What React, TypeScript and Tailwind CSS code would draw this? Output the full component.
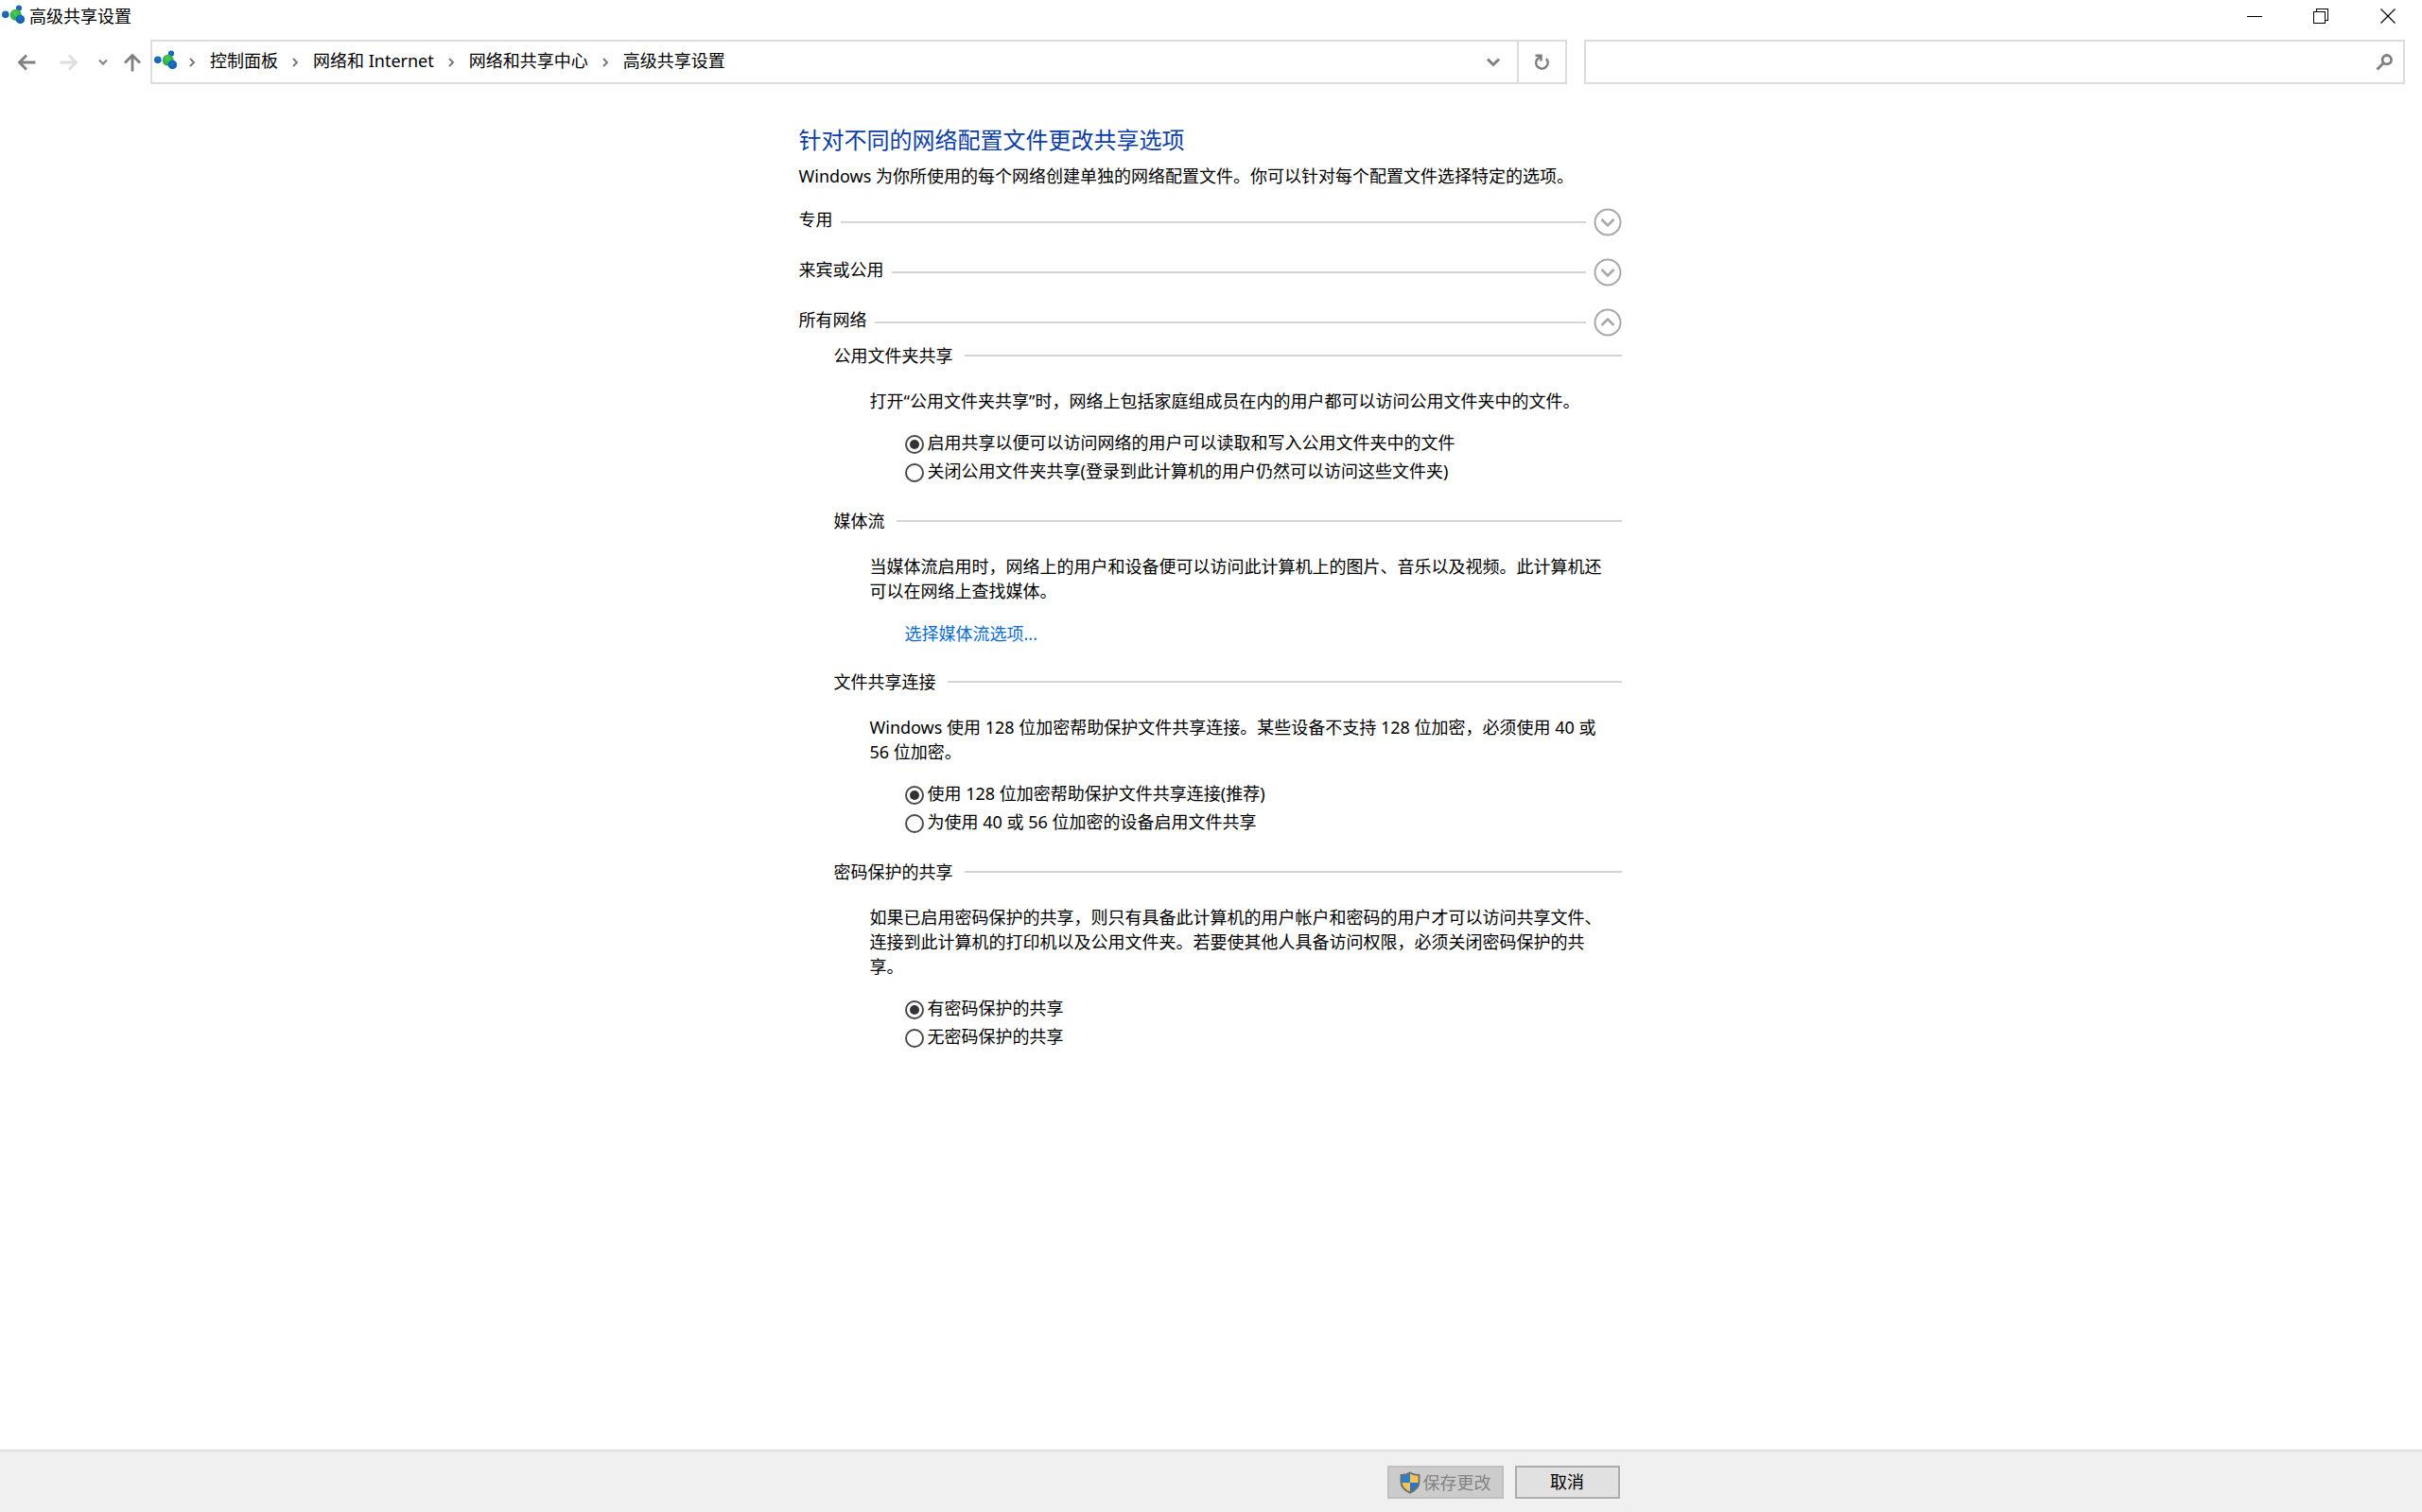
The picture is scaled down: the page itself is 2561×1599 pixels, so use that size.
import React, { useState } from 'react';
import type { ReactNode } from 'react';

interface OptionGroupProps {
  name: string;
  options: string[];
}

interface SettingProps {
  title: string;
  description: string;
  children: ReactNode;
}

interface ProfileRowProps {
  title: string;
  open: boolean;
  onToggle: () => void;
}

const crumbs = ['控制面板', '网络和 Internet', '网络和共享中心', '高级共享设置'];

const NetworkIcon: React.FC = () => (
  <svg width="26" height="22" viewBox="0 0 26 22" className="shrink-0" aria-hidden="true">
    <defs>
      <radialGradient id="nodeBlue" cx="45%" cy="40%" r="65%">
        <stop offset="0" stopColor="#1f74c6" />
        <stop offset="1" stopColor="#0f5aa8" />
      </radialGradient>
      <radialGradient id="nodeGreen" cx="45%" cy="35%" r="65%">
        <stop offset="0" stopColor="#4fcb5a" />
        <stop offset="1" stopColor="#22a53c" />
      </radialGradient>
    </defs>
    <circle cx="3.800" cy="10.300" r="3.800" fill="url(#nodeBlue)" />
    <circle cx="18" cy="3.600" r="3.100" fill="url(#nodeBlue)" />
    <circle cx="14.700" cy="10.800" r="6" fill="url(#nodeGreen)" />
    <circle cx="19.400" cy="15.400" r="4.700" fill="url(#nodeBlue)" />
  </svg>
);

const ShieldIcon: React.FC = () => (
  <svg width="22" height="24" viewBox="0 0 22 24" aria-hidden="true">
    <clipPath id="shield">
      <path d="M11 1.500C8 3.500 4.500 4 1.500 4v7c0 6 4.500 9.500 9.500 11.500 5-2 9.500-5.500 9.500-11.500V4c-3 0-6.500-.5-9.500-2.500z" />
    </clipPath>
    <g clipPath="url(#shield)">
      <path d="M0 0h11v12H0z" fill="#2f80cc" />
      <path d="M11 0h11v12H11z" fill="#f6c453" />
      <path d="M0 12h11v12H0z" fill="#f6c453" />
      <path d="M11 12h11v12H11z" fill="#2f74c4" />
    </g>
    <path
      d="M11 1.500C8 3.500 4.500 4 1.500 4v7c0 6 4.500 9.500 9.500 11.500 5-2 9.500-5.500 9.500-11.500V4c-3 0-6.500-.5-9.500-2.500z"
      fill="none"
      stroke="#6b7075"
      strokeWidth="2"
    />
  </svg>
);

const Separator: React.FC = () => (
  <svg width="8" height="10" viewBox="0 0 8 10" fill="none" stroke="#7a7a7a" strokeWidth="2" aria-hidden="true">
    <path d="M2 1l4 4-4 4" />
  </svg>
);

const OptionGroup: React.FC<OptionGroupProps> = ({ name, options }) => {
  const [selected, setSelected] = useState<number>(0);

  return (
    <div className="pl-[38px] pt-4">
      {options.map((option, i) => (
        <label key={option} className="flex h-[30px] items-center gap-1">
          <input
            type="radio"
            name={name}
            checked={selected === i}
            onChange={() => setSelected(i)}
            className="mt-1 size-5 shrink-0 appearance-none rounded-full border-2 border-[#4a4a4a] bg-white bg-clip-content p-[3px] checked:bg-[#333]"
          />
          <span>{option}</span>
        </label>
      ))}
    </div>
  );
};

const Setting: React.FC<SettingProps> = ({ title, description, children }) => (
  <section className="pb-[25px] pl-[37px]">
    <div className="flex h-[26px] items-center gap-3">
      <h3>{title}</h3>
      <div className="h-[2px] flex-1 bg-[#d4d4d4]" />
    </div>
    <div className="pl-[38px] pr-[6px] pt-[22px]">
      <p>{description}</p>
    </div>
    <div className="pl-[37px]">{children}</div>
  </section>
);

const ProfileRow: React.FC<ProfileRowProps> = ({ title, open, onToggle }) => (
  <div className="flex h-[53px] items-center gap-2">
    <h2 className="pb-[6px]">{title}</h2>
    <div className="h-[2px] flex-1 bg-[#d4d4d4]" />
    <button type="button" onClick={onToggle} aria-label={title} aria-expanded={open}>
      <svg width="30" height="30" viewBox="0 0 30 30" fill="none" stroke="#a9a9a9" strokeWidth="2">
        <circle cx="15" cy="15" r="13.500" />
        <path d={open ? 'M8.500 18l6.500-6.500 6.500 6.500' : 'M8.500 12l6.500 6.500 6.500-6.500'} strokeWidth="2.600" />
      </svg>
    </button>
  </div>
);

const App: React.FC = () => {
  const [openProfile, setOpenProfile] = useState<string>('所有网络');

  const toggle = (title: string): void => {
    setOpenProfile(openProfile === title ? '' : title);
  };

  return (
    <div
      lang="zh-CN"
      className="flex min-h-screen flex-col bg-white font-['Noto_Sans','Noto_Sans_CJK_SC',sans-serif] text-[18px] leading-[26px] text-black"
    >
      <header className="flex h-[35px] items-center justify-between pl-[2px]">
        <div className="flex items-center gap-[3px]">
          <div className="pb-1">
            <NetworkIcon />
          </div>
          <h1 className="pb-[2px]">高级共享设置</h1>
        </div>
        <div className="flex h-full pb-[2px]">
          <button type="button" aria-label="最小化" className="flex w-[70px] items-center justify-center">
            <svg width="16" height="16" viewBox="0 0 16 16" stroke="#000" shapeRendering="crispEdges">
              <path d="M0 8h16" strokeWidth="1" />
            </svg>
          </button>
          <button type="button" aria-label="还原" className="flex w-[70px] items-center justify-center">
            <svg width="16" height="16" viewBox="0 0 16 16" fill="none" stroke="#000" shapeRendering="crispEdges">
              <path d="M.5 3.500h12v12H.500zM3.500 3.500v-3h12v12h-3" />
            </svg>
          </button>
          <button type="button" aria-label="关闭" className="flex w-[72px] items-center justify-center">
            <svg width="16" height="16" viewBox="0 0 16 16" stroke="#000">
              <path d="M.5.500l15 15M15.500.500l-15 15" strokeWidth="1.200" />
            </svg>
          </button>
        </div>
      </header>

      <nav className="flex items-center pb-2 pl-[18px] pr-[18px] pt-[7px]">
        <button type="button" aria-label="后退" className="mr-[25px]">
          <svg width="20" height="20" viewBox="0 0 20 20" fill="none" stroke="#808080" strokeWidth="2.800">
            <path d="M19.500 10H3M10 2.500L2.500 10l7.500 7.500" />
          </svg>
        </button>
        <button type="button" aria-label="前进" className="mr-[20px]">
          <svg width="20" height="20" viewBox="0 0 20 20" fill="none" stroke="#dedede" strokeWidth="2.800">
            <path d="M.5 10H17M10 2.500l7.500 7.500-7.500 7.500" />
          </svg>
        </button>
        <button type="button" aria-label="最近浏览的位置" className="mr-[15px]">
          <svg width="12" height="8" viewBox="0 0 12 8" fill="none" stroke="#8a8a8a" strokeWidth="2.400">
            <path d="M2 1.500l4 4 4-4" />
          </svg>
        </button>
        <button type="button" aria-label="上移" className="mr-[9px]">
          <svg width="20" height="20" viewBox="0 0 20 20" fill="none" stroke="#808080" strokeWidth="2.800">
            <path d="M10 19.500V3M2 10.500l8-8 8 8" />
          </svg>
        </button>
        <div className="flex h-[47px] flex-[1506] border-2 border-[#dcdcdc]">
          <div className="flex flex-1 items-center gap-[10px] pl-[2px]">
            <div className="pb-1">
              <NetworkIcon />
            </div>
            {crumbs.map(crumb => (
              <div key={crumb} className="flex items-center gap-[15px] pr-[4px]">
                <Separator />
                <a href="#" className="pb-1">{crumb}</a>
              </div>
            ))}
          </div>
          <button type="button" aria-label="以前的位置" className="flex w-[50px] items-center justify-center">
            <svg width="16" height="12" viewBox="0 0 16 12" fill="none" stroke="#808080" strokeWidth="3">
              <path d="M2 2.500l6 6 6-6" />
            </svg>
          </button>
          <button
            type="button"
            aria-label="刷新"
            className="flex w-[51px] items-center justify-center border-l-2 border-[#dcdcdc]"
          >
            <svg width="18" height="18" viewBox="0 0 18 18" fill="none" stroke="#808080" strokeWidth="2.600">
              <path d="M14 5.200A6.200 6.200 0 1 1 4.500 5.600L7.800 2.800M2.500 1.800h6v5.700" />
            </svg>
          </button>
        </div>
        <div className="ml-[18px] flex h-[47px] flex-[860] items-center border-2 border-[#dcdcdc] pr-[11px]">
          <input type="text" aria-label="搜索" className="h-full min-w-0 flex-1 px-2 outline-none" />
          <svg width="18" height="18" viewBox="0 0 18 18" fill="none" stroke="#808080" strokeWidth="2.800">
            <circle cx="11.800" cy="6.200" r="4.700" />
            <path d="M8.500 9.500L1.500 16.500" />
          </svg>
        </div>
      </nav>

      <main className="flex-1 pr-[2px] pt-[35px]">
        <div className="mx-auto w-full max-w-[870px]">
          <h2 className="text-[24px] leading-[32px] text-[#0b3da6]">针对不同的网络配置文件更改共享选项</h2>
          <p className="pb-[9px] pt-[9px]">
            Windows 为你所使用的每个网络创建单独的网络配置文件。你可以针对每个配置文件选择特定的选项。
          </p>
          {['专用', '来宾或公用', '所有网络'].map(title => (
            <ProfileRow key={title} title={title} open={openProfile === title} onToggle={() => toggle(title)} />
          ))}

          {openProfile === '所有网络' && (
            <div className="-mt-1">
              <Setting
                title="公用文件夹共享"
                description="打开“公用文件夹共享”时，网络上包括家庭组成员在内的用户都可以访问公用文件夹中的文件。"
              >
                <OptionGroup
                  name="public-folder"
                  options={[
                    '启用共享以便可以访问网络的用户可以读取和写入公用文件夹中的文件',
                    '关闭公用文件夹共享(登录到此计算机的用户仍然可以访问这些文件夹)',
                  ]}
                />
              </Setting>
              <Setting
                title="媒体流"
                description="当媒体流启用时，网络上的用户和设备便可以访问此计算机上的图片、音乐以及视频。此计算机还可以在网络上查找媒体。"
              >
                <div className="pl-[38px] pt-[19px]">
                  <a href="#" className="text-[#0a6cd0]">选择媒体流选项...</a>
                </div>
              </Setting>
              <Setting
                title="文件共享连接"
                description="Windows 使用 128 位加密帮助保护文件共享连接。某些设备不支持 128 位加密，必须使用 40 或 56 位加密。"
              >
                <OptionGroup
                  name="encryption"
                  options={['使用 128 位加密帮助保护文件共享连接(推荐)', '为使用 40 或 56 位加密的设备启用文件共享']}
                />
              </Setting>
              <Setting
                title="密码保护的共享"
                description="如果已启用密码保护的共享，则只有具备此计算机的用户帐户和密码的用户才可以访问共享文件、连接到此计算机的打印机以及公用文件夹。若要使其他人具备访问权限，必须关闭密码保护的共享。"
              >
                <OptionGroup name="password" options={['有密码保护的共享', '无密码保护的共享']} />
              </Setting>
            </div>
          )}
        </div>
      </main>

      <footer className="border-t-2 border-[#dfdfdf] bg-[#f0f0f0] pr-[2px]">
        <div className="mx-auto flex w-full max-w-[870px] justify-end gap-3 pb-[14px] pr-[2px] pt-[15px]">
          <button
            type="button"
            disabled
            className="flex h-[35px] w-[123px] items-center justify-center gap-[3px] border-2 border-[#bfbfbf] bg-[#cccccc] text-[#838383]"
          >
            <ShieldIcon />
            保存更改
          </button>
          <button type="button" className="h-[35px] w-[111px] border-2 border-[#adadad] bg-[#e1e1e1] leading-[31px]">
            取消
          </button>
        </div>
      </footer>
    </div>
  );
};

export default App;
